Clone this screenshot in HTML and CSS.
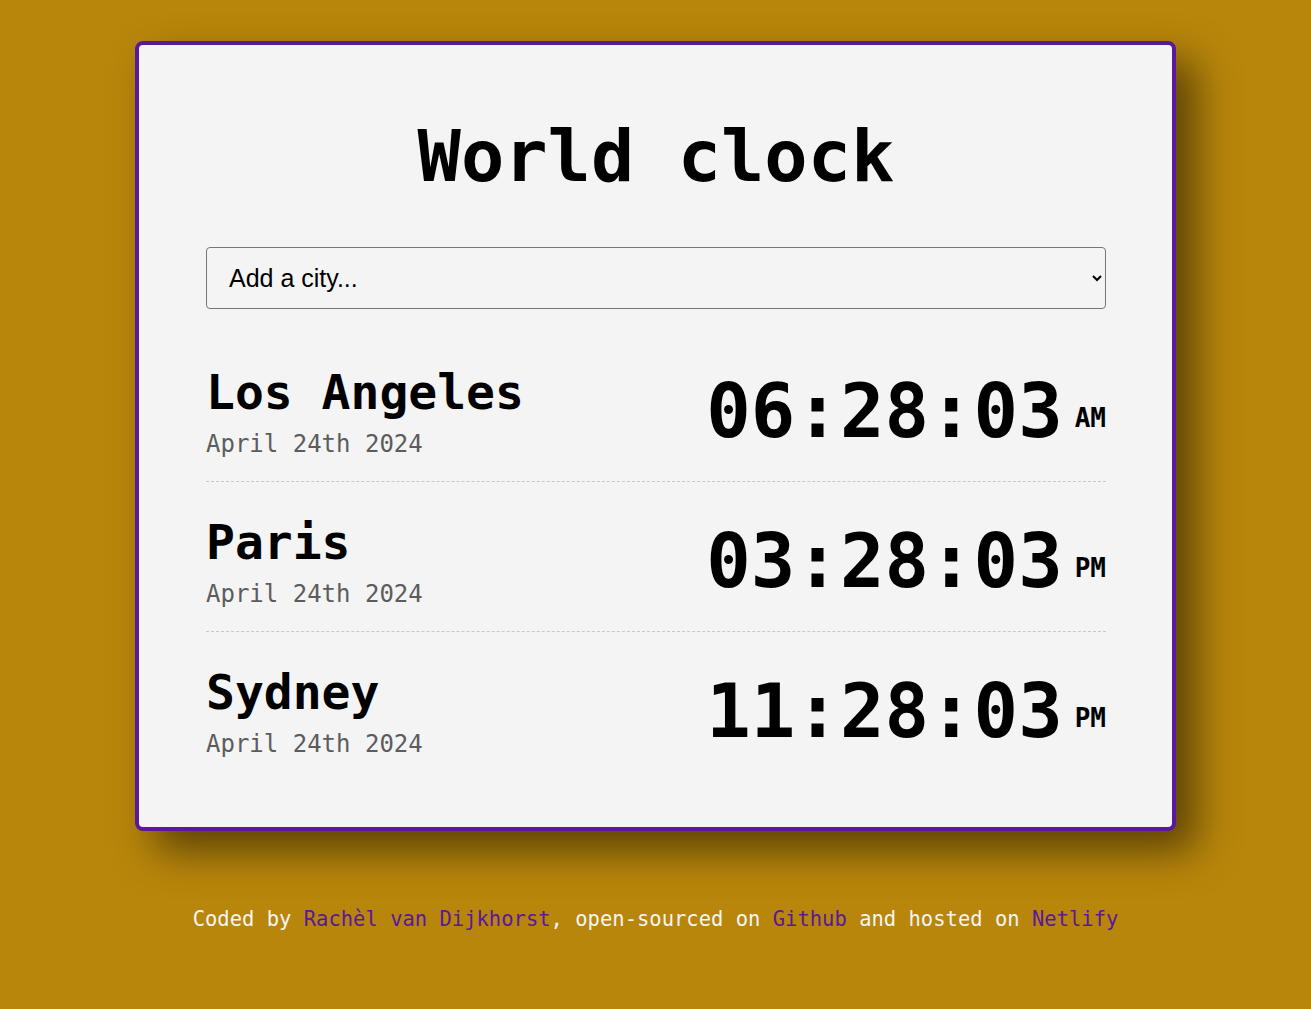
FILE: index.html
```html
<!DOCTYPE html>
<html lang="en">
<head>
<meta charset="utf-8">
<title>World clock</title>
<link rel="stylesheet" href="styles.css">
</head>
<body>
<main class="card">
  <h1 class="title">World clock</h1>
  <select class="city-select">
    <option>Add a city...</option>
    <option>Tokyo</option>
    <option>New York</option>
  </select>
  <div class="cities">
    <div class="city">
      <div class="city-info">
        <div class="city-name">Los Angeles</div>
        <div class="city-date">April 24th 2024</div>
      </div>
      <div class="city-time">06:28:03<span class="ampm">AM</span></div>
    </div>
    <div class="city">
      <div class="city-info">
        <div class="city-name">Paris</div>
        <div class="city-date">April 24th 2024</div>
      </div>
      <div class="city-time">03:28:03<span class="ampm">PM</span></div>
    </div>
    <div class="city">
      <div class="city-info">
        <div class="city-name">Sydney</div>
        <div class="city-date">April 24th 2024</div>
      </div>
      <div class="city-time">11:28:03<span class="ampm">PM</span></div>
    </div>
  </div>
</main>
<footer class="footer">
  Coded by <a href="#">Rachèl van Dijkhorst</a>, open-sourced on <a href="#">Github</a> and hosted on <a href="#">Netlify</a>
</footer>
</body>
</html>
```

FILE: styles.css
```css
html, body {
  margin: 0;
  padding: 0;
}

body {
  background: #b8860b;
  font-family: "DejaVu Sans Mono", "Liberation Mono", monospace;
  min-height: 1009px;
}

.card {
  box-sizing: border-box;
  width: 1041px;
  margin: 41px auto 0;
  padding: 75px 66px 46px 67px;
  background: #f4f4f4;
  border: 4px solid #5a189a;
  border-radius: 8px;
  box-shadow: 20px 20px 40px rgba(0, 0, 0, 0.5);
}

.title {
  margin: 0;
  font-size: 72px;
  line-height: 72px;
  font-weight: 700;
  text-align: center;
  color: #000;
}

.city-select {
  display: block;
  box-sizing: border-box;
  width: 100%;
  height: 62px;
  margin-top: 55px;
  padding: 0 14px 0 18px;
  font-family: "Liberation Sans", Arial, sans-serif;
  font-size: 25px;
  color: #000;
  background: #f4f4f4;
  border: 1px solid #767676;
  border-radius: 4px;
}

.cities {
  margin-top: 23px;
}

.city {
  display: flex;
  justify-content: space-between;
  align-items: center;
  padding: 32px 0 23px;
  border-bottom: 1px dashed #c8c8c8;
}

.city:last-child {
  border-bottom: none;
}

.city-name {
  font-size: 48px;
  line-height: 56px;
  font-weight: 700;
  color: #000;
}

.city-date {
  margin-top: 10px;
  font-size: 24px;
  line-height: 28px;
  color: #5c5c5c;
}

.city-time {
  font-size: 74px;
  line-height: 74px;
  font-weight: 700;
  color: #000;
  white-space: nowrap;
}

.ampm {
  display: inline-block;
  margin-left: 12px;
  font-size: 26px;
  line-height: 26px;
  vertical-align: 10px;
}

.footer {
  margin-top: 76px;
  text-align: center;
  font-size: 20.5px;
  line-height: 24px;
  color: #f4f4f4;
}

.footer a {
  color: #5a189a;
  text-decoration: none;
}
```
